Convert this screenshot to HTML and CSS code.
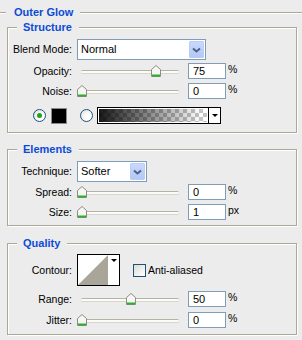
FILE: index.html
```html
<!DOCTYPE html>
<html lang="en">
<head>
  <meta charset="UTF-8">
  <title>Outer Glow</title>
  <link rel="stylesheet" href="styles.css">
</head>
<body>
  <div class="title"><span>Outer Glow</span></div>

  <fieldset class="group structure">
    <legend>Structure</legend>
    <div class="row sel-row">
      <span class="lbl">Blend Mode:</span>
      <div class="select blend">
        <span class="val">Normal</span>
        <span class="drop"><svg width="9" height="6" viewBox="0 0 9 6"><path d="M1 1.5 4.5 4.5 8 1.5" fill="none" stroke="#4d6185" stroke-width="2"/></svg></span>
      </div>
    </div>
    <div class="row">
      <span class="lbl">Opacity:</span>
      <div class="slider">
        <div class="track"></div>
        <svg class="thumb" style="left:73.5px" width="10" height="12" viewBox="0 0 10 12"><path d="M0.5 4.5 5 0.5 9.5 4.5V11.5H0.5Z" fill="#f6f6f2" stroke="#8e8d84"/><path d="M1 10.5H9" stroke="#2fae2f" stroke-width="2"/></svg>
      </div>
      <div class="num">75</div><span class="unit">%</span>
    </div>
    <div class="row">
      <span class="lbl">Noise:</span>
      <div class="slider">
        <div class="track"></div>
        <svg class="thumb" style="left:0px" width="10" height="12" viewBox="0 0 10 12"><path d="M0.5 4.5 5 0.5 9.5 4.5V11.5H0.5Z" fill="#f6f6f2" stroke="#8e8d84"/><path d="M1 10.5H9" stroke="#2fae2f" stroke-width="2"/></svg>
      </div>
      <div class="num">0</div><span class="unit">%</span>
    </div>
    <div class="colors">
      <span class="radio on"></span>
      <span class="swatch"></span>
      <span class="radio"></span>
      <div class="grad">
        <span class="fill"></span>
        <span class="arrow"><i></i></span>
      </div>
    </div>
  </fieldset>

  <fieldset class="group elements">
    <legend>Elements</legend>
    <div class="row sel-row">
      <span class="lbl">Technique:</span>
      <div class="select tech">
        <span class="val">Softer</span>
        <span class="drop"><svg width="9" height="6" viewBox="0 0 9 6"><path d="M1 1.5 4.5 4.5 8 1.5" fill="none" stroke="#4d6185" stroke-width="2"/></svg></span>
      </div>
    </div>
    <div class="row">
      <span class="lbl">Spread:</span>
      <div class="slider">
        <div class="track"></div>
        <svg class="thumb" style="left:0px" width="10" height="12" viewBox="0 0 10 12"><path d="M0.5 4.5 5 0.5 9.5 4.5V11.5H0.5Z" fill="#f6f6f2" stroke="#8e8d84"/><path d="M1 10.5H9" stroke="#2fae2f" stroke-width="2"/></svg>
      </div>
      <div class="num">0</div><span class="unit">%</span>
    </div>
    <div class="row">
      <span class="lbl">Size:</span>
      <div class="slider">
        <div class="track"></div>
        <svg class="thumb" style="left:0px" width="10" height="12" viewBox="0 0 10 12"><path d="M0.5 4.5 5 0.5 9.5 4.5V11.5H0.5Z" fill="#f6f6f2" stroke="#8e8d84"/><path d="M1 10.5H9" stroke="#2fae2f" stroke-width="2"/></svg>
      </div>
      <div class="num">1</div><span class="unit">px</span>
    </div>
  </fieldset>

  <fieldset class="group quality">
    <legend>Quality</legend>
    <div class="row contour-row">
      <span class="lbl">Contour:</span>
      <div class="contour">
        <svg class="curve" width="30" height="30" viewBox="0 0 30 30"><path d="M0 30 30 0V30Z" fill="#a9a598"/></svg>
        <span class="arrow"><i></i></span>
      </div>
      <span class="check"></span>
      <span class="check-lbl">Anti-aliased</span>
    </div>
    <div class="row">
      <span class="lbl">Range:</span>
      <div class="slider">
        <div class="track"></div>
        <svg class="thumb" style="left:49px" width="10" height="12" viewBox="0 0 10 12"><path d="M0.5 4.5 5 0.5 9.5 4.5V11.5H0.5Z" fill="#f6f6f2" stroke="#8e8d84"/><path d="M1 10.5H9" stroke="#2fae2f" stroke-width="2"/></svg>
      </div>
      <div class="num">50</div><span class="unit">%</span>
    </div>
    <div class="row">
      <span class="lbl">Jitter:</span>
      <div class="slider">
        <div class="track"></div>
        <svg class="thumb" style="left:0px" width="10" height="12" viewBox="0 0 10 12"><path d="M0.5 4.5 5 0.5 9.5 4.5V11.5H0.5Z" fill="#f6f6f2" stroke="#8e8d84"/><path d="M1 10.5H9" stroke="#2fae2f" stroke-width="2"/></svg>
      </div>
      <div class="num">0</div><span class="unit">%</span>
    </div>
  </fieldset>
</body>
</html>
```

FILE: styles.css
```css
body {
  margin: 0;
  padding-top: 6px;
  width: 302px;
  height: 340px;
  overflow: hidden;
  background-color: #ececec;
  color: #000;
  font-family: 'Liberation Sans', Arial, sans-serif;
  font-size: 10.5px;
  line-height: 13px;
}
.title {
  display: flex;
  align-items: center;
  height: 13px;
}
.title::before,
.title::after {
  content: '';
  height: 1px;
  background: #aca899;
  box-shadow: 0 1px 0 #fff;
}
.title::before {
  width: 6px;
}
.title::after {
  flex: 1;
}
.title span,
.group legend {
  color: #0b4bd6;
  font-weight: bold;
  font-size: 11px;
}
.title span {
  padding: 0 7px 0 8px;
}
.group {
  margin: 2px 5px 0 7px;
  padding: 0;
  border: 1px solid #aca899;
  box-shadow: 1px 1px 0 #fff, inset 1px 1px 0 #fff;
  min-width: 0;
}
.group legend {
  margin-left: 9px;
  padding: 0 7px 0 6px;
  line-height: 13px;
  background: #ececec;
}
.structure {
  padding: 5px 0 8px;
}
.elements {
  margin-top: 10px;
  padding: 5px 0 5px;
}
.quality {
  margin-top: 11px;
  padding: 4px 0 6px;
}
.row {
  display: flex;
  align-items: center;
  height: 16px;
  margin-top: 4px;
}
.structure .row:nth-of-type(2) {
  margin-top: 3px;
}
.elements .row:nth-of-type(2) {
  margin-top: 2px;
}
.sel-row {
  height: 21px;
  margin-top: 0;
}
.lbl {
  width: 64px;
  margin-right: 5px;
  text-align: right;
  white-space: nowrap;
}

/* combo boxes */
.select {
  display: flex;
  align-items: stretch;
  height: 21px;
  box-sizing: border-box;
  border: 1px solid #7f9db9;
  background: #fff;
  padding: 1px;
}
.select.blend {
  width: 129px;
}
.select.tech {
  width: 70px;
}
.select .val {
  flex: 1;
  padding-left: 2px;
  line-height: 17px;
  font-size: 11px;
}
.select .drop {
  width: 15px;
  display: flex;
  align-items: center;
  justify-content: center;
  background: linear-gradient(#c9d8fc, #b4c7f6);
  border: 1px solid #bccdf5;
  box-sizing: border-box;
  border-radius: 1px;
}

/* sliders */
.slider {
  position: relative;
  display: flex;
  align-items: center;
  width: 104px;
  height: 16px;
  padding: 0 2px 0 4px;
  box-sizing: border-box;
  margin-right: 7px;
}
.track {
  flex: 1;
  height: 2px;
  border-top: 1px solid #b6b3a6;
  border-radius: 2px;
  background: #fbfbf8;
  box-shadow: 0 1px 0 #d8d6cc;
}
.thumb {
  position: absolute;
  top: 2px;
  display: block;
}
.num {
  width: 38px;
  height: 16px;
  box-sizing: border-box;
  border: 1px solid #7f9db9;
  background: #fff;
  padding-left: 4px;
  line-height: 14px;
  font-size: 11px;
}
.unit {
  margin-left: 2px;
  align-self: flex-start;
  line-height: 13px;
}

/* colour row */
.colors {
  display: flex;
  align-items: center;
  height: 17px;
  margin-top: 8px;
  padding-left: 25px;
}
.radio {
  width: 13px;
  height: 13px;
  box-sizing: border-box;
  border: 1px solid #1c5180;
  border-radius: 50%;
  background: radial-gradient(circle at 65% 65%, #fff 30%, #d9d8d0 100%);
  position: relative;
}
.radio.on::after {
  content: '';
  position: absolute;
  left: 3px;
  top: 3px;
  width: 5px;
  height: 5px;
  border-radius: 50%;
  background: #21a121;
}
.swatch {
  width: 16px;
  height: 16px;
  box-sizing: border-box;
  border: 1px solid #8a8a8a;
  background: #000;
  margin: 0 13px 0 5px;
}
.grad {
  display: flex;
  width: 124px;
  height: 17px;
  margin-left: 4px;
  box-sizing: border-box;
  border: 1px solid #000;
}
.grad .fill {
  flex: 1;
  border: 1px solid #fff;
  background:
    linear-gradient(to right, rgba(0, 0, 0, 0.9), rgba(0, 0, 0, 0) 95%),
    repeating-conic-gradient(#c4c4c4 0 25%, #fff 0 50%) 0 0 / 8px 8px;
}
.arrow {
  width: 11px;
  background: #fff;
  display: flex;
  justify-content: center;
}
.grad .arrow {
  border-left: 1px solid #000;
  align-items: center;
}
.arrow i {
  width: 0;
  height: 0;
  border-left: 3px solid transparent;
  border-right: 3px solid transparent;
  border-top: 3px solid #000;
}

/* quality */
.contour-row {
  height: 32px;
  margin-top: 0;
}
.contour {
  display: flex;
  width: 43px;
  height: 32px;
  box-sizing: border-box;
  border: 1px solid #000;
  background: #fff;
}
.contour .curve {
  display: block;
}
.contour .arrow {
  flex: 1;
  padding-top: 4px;
  align-items: flex-start;
}
.check {
  width: 13px;
  height: 13px;
  box-sizing: border-box;
  border: 1px solid #1c5180;
  background: linear-gradient(135deg, #dcdcd4, #fff);
  margin: 0 2px 0 13px;
}
.quality .row:nth-of-type(2),
.quality .row:nth-of-type(3) {
  margin-top: 5px;
}
```
